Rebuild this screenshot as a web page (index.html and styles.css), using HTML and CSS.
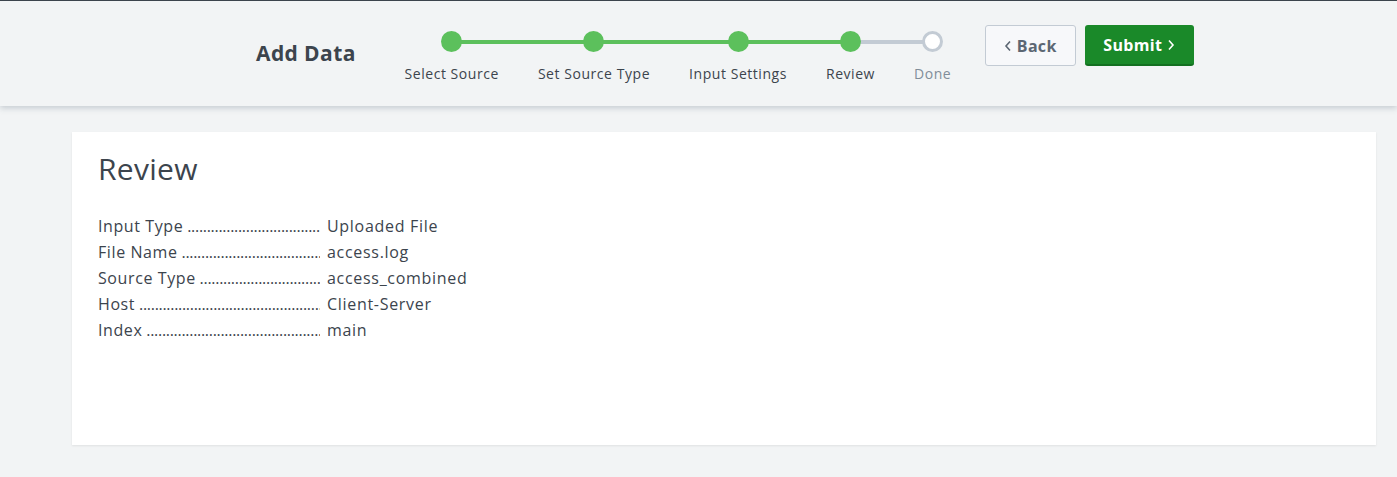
FILE: index.html
```
<!DOCTYPE html>
<html>
<head>
<meta charset="utf-8">
<link rel="stylesheet" href="styles.css">
</head>
<body>
<header class="header">
  <h1 class="title">Add Data</h1>
  <ol class="steps">
    <li class="step done"><span class="dot"></span><span class="label">Select Source</span></li>
    <li class="step done"><span class="dot"></span><span class="label">Set Source Type</span></li>
    <li class="step done"><span class="dot"></span><span class="label">Input Settings</span></li>
    <li class="step current"><span class="dot"></span><span class="label">Review</span></li>
    <li class="step todo"><span class="dot"></span><span class="label">Done</span></li>
  </ol>
  <div class="actions">
    <button class="btn btn-back"><svg class="chev" width="8" height="12" viewBox="0 0 8 12"><path d="M6 1.5 L2 6 L6 10.5" fill="none" stroke="currentColor" stroke-width="1.6"/></svg>Back</button>
    <button class="btn btn-submit">Submit<svg class="chev" width="8" height="12" viewBox="0 0 8 12"><path d="M2 1.5 L6 6 L2 10.5" fill="none" stroke="currentColor" stroke-width="1.6"/></svg></button>
  </div>
</header>
<main class="main">
  <section class="card">
    <h2 class="heading">Review</h2>
    <dl class="list">
      <div class="row"><dt class="key">Input Type</dt><dd class="val">Uploaded File</dd></div>
      <div class="row"><dt class="key">File Name</dt><dd class="val">access.log</dd></div>
      <div class="row"><dt class="key">Source Type</dt><dd class="val">access_combined</dd></div>
      <div class="row"><dt class="key">Host</dt><dd class="val">Client-Server</dd></div>
      <div class="row"><dt class="key">Index</dt><dd class="val">main</dd></div>
    </dl>
  </section>
</main>
</body>
</html>
```
FILE: styles.css
```
* { box-sizing: border-box; }
html, body { margin: 0; padding: 0; }
body {
  background: #f2f4f5;
  font-family: "Open Sans", Lato, sans-serif;
  color: #3c444d;
  border-top: 1px solid #3c444d;
  height: 477px;
  overflow: hidden;
}
.header {
  height: 105px;
  display: flex;
  align-items: flex-start;
  padding-left: 256px;
  background: #f2f4f5;
  box-shadow: 0 2px 6px rgba(60, 80, 100, 0.25);
  position: relative;
}
.title {
  margin: 38px 0 0 0;
  font-size: 21px;
  font-weight: 700;
  line-height: 28px;
  width: 129px;
  letter-spacing: 0.4px;
}
.steps {
  list-style: none;
  margin: 30px 0 0 0;
  padding: 0;
  display: flex;
}
.step {
  position: relative;
  display: flex;
  flex-direction: column;
  align-items: center;
  padding: 0 19.5px;
}
.step::before, .step::after {
  content: "";
  position: absolute;
  top: 9px;
  height: 4px;
  background: #5cc05c;
}
.step::before { left: 0; right: 50%; }
.step::after { left: 50%; right: 0; }
.step:first-child::before, .step:last-child::after { display: none; }
.step.current::after, .step.todo::before { background: #c3cbd4; }
.dot {
  position: relative;
  z-index: 1;
  width: 21px;
  height: 21px;
  border-radius: 50%;
  background: #5cc05c;
}
.todo .dot {
  background: #fff;
  border: 3px solid #c3cbd4;
}
.label {
  margin-top: 12px;
  font-size: 14px;
  line-height: 20px;
  white-space: nowrap;
  letter-spacing: 0.55px;
}
.todo .label { color: #818d99; }
.actions {
  display: flex;
  gap: 9px;
  margin: 24px 0 0 14px;
}
.btn {
  height: 41px;
  border-radius: 3px;
  font-family: inherit;
  font-size: 16px;
  font-weight: 700;
  letter-spacing: 0.3px;
  display: flex;
  align-items: center;
  gap: 5px;
  cursor: pointer;
}
.btn-back {
  width: 91px;
  justify-content: center;
  background: #f7f8fa;
  border: 1px solid #c3cbd4;
  color: #5c6773;
}
.btn-submit {
  width: 109px;
  justify-content: center;
  background: #1a8929;
  border: none;
  border-bottom: 2px solid #137020;
  color: #fff;
}
.main {
  padding: 26px 21px 0 72px;
}
.card {
  height: 313px;
  background: #fff;
  box-shadow: 0 1px 2px rgba(0, 0, 0, 0.08);
  padding: 16px 26px;
}
.heading {
  margin: 0;
  font-size: 30px;
  font-weight: 400;
  line-height: 42px;
  letter-spacing: 0.3px;
}
.list {
  margin: 23px 0 0 0;
}
.row {
  display: flex;
  font-size: 16px;
  line-height: 26px;
}
.key {
  width: 222px;
  overflow: hidden;
  white-space: nowrap;
  margin: 0;
  letter-spacing: 0.6px;
}
.key::after {
  content: " ....................................................................................";
  letter-spacing: -0.3px;
}
.val {
  margin: 0 0 0 7px;
  letter-spacing: 0.7px;
}
```
